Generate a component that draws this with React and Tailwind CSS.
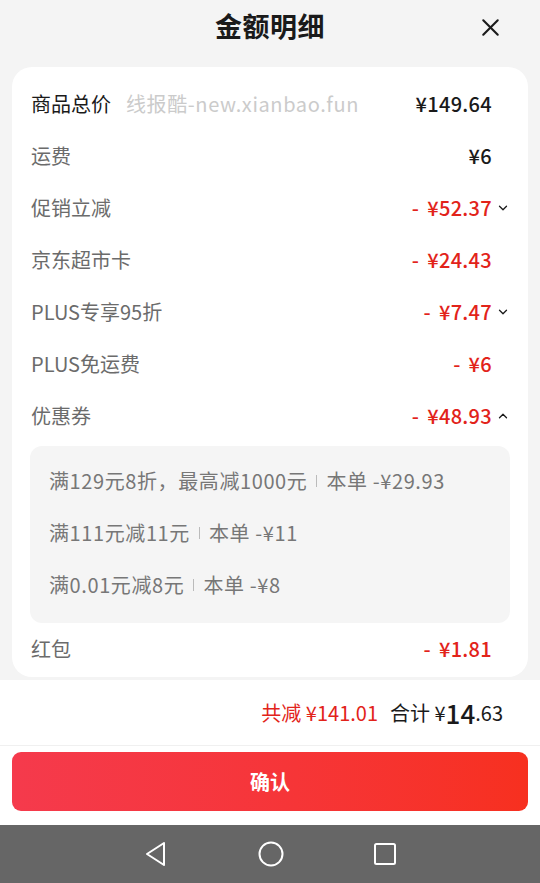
import { X, ChevronDown, ChevronUp } from 'lucide-react';

const font = { fontFamily: '"Noto Sans CJK SC", "Noto Sans", sans-serif' };

const rows = [
  { label: '商品总价', amount: '¥149.64', darkLabel: true, watermark: true },
  { label: '运费', amount: '¥6' },
  { label: '促销立减', amount: '¥52.37', minus: true, chevron: 'down' },
  { label: '京东超市卡', amount: '¥24.43', minus: true },
  { label: 'PLUS专享95折', amount: '¥7.47', minus: true, chevron: 'down' },
  { label: 'PLUS免运费', amount: '¥6', minus: true },
  { label: '优惠券', amount: '¥48.93', minus: true, chevron: 'up' },
];

const coupons = [
  { rule: '满129元8折，最高减1000元', amount: '本单 -¥29.93' },
  { rule: '满111元减11元', amount: '本单 -¥11' },
  { rule: '满0.01元减8元', amount: '本单 -¥8' },
];

const Row = ({ row }) => (
  <div className="h-[52px] flex items-center">
    <span className={`pl-[1px] text-[20px] ${row.darkLabel ? 'text-[#1a1a1a]' : 'text-[#6b6b6b]'}`}>{row.label}</span>
    {row.watermark && (
      <span className="ml-[15px] text-[20px] text-[#cbcbcb] tracking-[0.6px]">线报酷-new.xianbao.fun</span>
    )}
    <span className={`ml-auto text-[20px] font-medium tracking-[0.3px] ${row.minus ? 'text-[#e2231a]' : 'text-[#1a1a1a]'}`}>
      {row.minus && <span className="mr-[8px]">-</span>}
      {row.amount}
    </span>
    <span className="w-[18px] flex justify-end">
      {row.chevron === 'down' && <ChevronDown className="w-[14px] h-[14px] text-[#1a1a1a]" strokeWidth={2.2} />}
      {row.chevron === 'up' && <ChevronUp className="w-[14px] h-[14px] text-[#1a1a1a]" strokeWidth={2.2} />}
    </span>
  </div>
);

export default function App() {
  return (
    <div className="w-[540px] h-[883px] bg-[#f4f4f4] flex flex-col overflow-hidden" style={font}>
      <div className="h-[67px] relative flex items-center justify-center pb-[14px]">
        <h1 className="text-[27px] font-bold text-[#1a1a1a] tracking-[0.5px]">金额明细</h1>
        <X className="absolute right-[35px] top-[13px] w-[29px] h-[29px] text-[#1a1a1a]" strokeWidth={1.7} />
      </div>

      <div className="mx-[12px] bg-white rounded-[20px] px-[18px] pt-[11px] h-[610px]">
        {rows.map((r) => (
          <Row key={r.label} row={r} />
        ))}
        <div className="mt-[4px] bg-[#f5f5f5] rounded-[12px] pt-[9px] pb-[12px] px-[19px]">
          {coupons.map((c) => (
            <div key={c.rule} className="h-[52px] flex items-center text-[20px] text-[#777] tracking-[0.6px]">
              <span>{c.rule}</span>
              <span className="mx-[9px] w-[1px] h-[12px] bg-[#bbb]" />
              <span>{c.amount}</span>
            </div>
          ))}
        </div>
        <Row row={{ label: '红包', amount: '¥1.81', minus: true }} />
      </div>

      <div className="mt-[3px] bg-white flex-1 flex flex-col">
        <div className="h-[66px] flex items-center justify-end pr-[37px] border-b border-[#f0f0f0]">
          <span className="text-[20px] text-[#e2231a]">共减 ¥141.01</span>
          <span className="ml-[12px] text-[20px] text-[#1a1a1a]">合计 ¥</span>
          <span className="text-[26px] font-medium text-[#1a1a1a] leading-none">14</span>
          <span className="text-[20px] text-[#1a1a1a]">.63</span>
        </div>
        <div className="px-[12px] pt-[6px]">
          <button className="w-full h-[59px] rounded-[9px] bg-gradient-to-r from-[#f53a4c] to-[#f7301f] text-white text-[20px] font-bold">
            确认
          </button>
        </div>
      </div>

      <div className="h-[58px] bg-[#666666] flex items-center justify-center gap-[90px]">
        <svg width="24" height="26" viewBox="0 0 24 26" fill="none" stroke="white" strokeWidth="2" strokeLinejoin="round">
          <path d="M20 2 L3 13 L20 24 Z" />
        </svg>
        <svg width="26" height="26" viewBox="0 0 26 26" fill="none" stroke="white" strokeWidth="2">
          <circle cx="13" cy="13" r="11.5" />
        </svg>
        <svg width="22" height="22" viewBox="0 0 22 22" fill="none" stroke="white" strokeWidth="2">
          <rect x="1" y="1" width="20" height="20" rx="1.5" />
        </svg>
      </div>
    </div>
  );
}
